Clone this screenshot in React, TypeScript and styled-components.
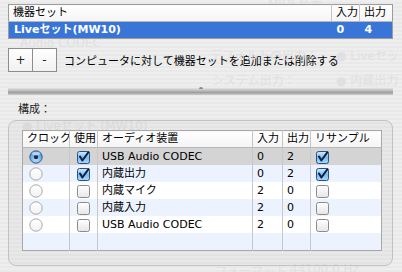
import * as React from "react";
import styled, { createGlobalStyle } from "styled-components";

const GlobalStyle = createGlobalStyle`
  html, body {
    margin: 0;
    padding: 0;
  }
  body {
    width: 402px;
    height: 272px;
    overflow: hidden;
    font-family: "DejaVu Sans", "Noto Sans CJK JP", sans-serif;
    font-size: 11px;
    color: #000;
    background: repeating-linear-gradient(to bottom, #eeeeee 0px, #eeeeee 2px, #e9e9e9 2px, #e9e9e9 4px);
  }
`;

const Window = styled.div`
  position: relative;
  width: 402px;
  height: 272px;
  box-sizing: border-box;
  padding: 4px 9px 0 8px;
  overflow: hidden;
`;

const Ghost = styled.div<{ $x: number; $y: number }>`
  position: absolute;
  left: ${(p) => p.$x}px;
  top: ${(p) => p.$y}px;
  color: #e0e0e0;
  font-size: 12px;
  white-space: nowrap;
  pointer-events: none;
`;

const SetTable = styled.table`
  width: 385px;
  border-collapse: collapse;
  border: 1px solid #9c9c9c;
  background: #fff;
  table-layout: fixed;
  position: relative;
`;

const HeadCell = styled.th<{ $w?: number; $last?: boolean }>`
  box-sizing: border-box;
  width: ${(p) => (p.$w ? `${p.$w}px` : "auto")};
  height: 16px;
  padding: 0 0 0 4px;
  text-align: left;
  font-weight: normal;
  background: linear-gradient(to bottom, #ffffff, #f4f4f4);
  border-bottom: 1px solid #b8b8b8;
  border-right: ${(p) => (p.$last ? "none" : "1px solid #c4c4c4")};
  white-space: nowrap;
  overflow: hidden;
  line-height: 16px;
`;

const SelRow = styled.tr`
  background: #3875d7;
  color: #fff;
  font-weight: bold;
`;

const SelCell = styled.td`
  height: 16px;
  padding: 0 0 0 5px;
  line-height: 16px;
  white-space: nowrap;
`;

const ButtonRow = styled.div`
  display: flex;
  align-items: center;
  margin-top: 9px;
  height: 24px;
`;

const SquareButton = styled.div<{ $first?: boolean }>`
  width: 23px;
  height: 22px;
  display: flex;
  align-items: center;
  justify-content: center;
  border: 1px solid #8c8c8c;
  border-left: ${(p) => (p.$first ? "1px solid #8c8c8c" : "none")};
  background: linear-gradient(to bottom, #ffffff, #f1f1f1);
  font-size: 12px;
  color: #222;
`;

const HelpText = styled.span`
  margin-left: 7px;
  font-size: 11px;
`;

const Splitter = styled.div`
  position: relative;
  margin-top: 15px;
  height: 8px;
  width: 385px;
  background: linear-gradient(to bottom, #f4f4f4 0%, #c8c8c8 35%, #9e9e9e 70%, #cfcfcf 100%);
  border-radius: 1px;
`;

const Dimple = styled.div`
  position: absolute;
  left: 191px;
  top: 0;
  width: 4px;
  height: 2px;
  border-radius: 2px 2px 0 0;
  background: #8a8a8a;
`;

const SectionLabel = styled.div`
  margin: 8px 0 0 10px;
  height: 14px;
  line-height: 14px;
  font-size: 11px;
  color: #222;
`;

const GroupBox = styled.div`
  margin-top: 3px;
  width: 385px;
  height: 146px;
  box-sizing: border-box;
  border: 1px solid #c2c2c2;
  border-radius: 8px;
  background: rgba(0, 0, 0, 0.025);
  padding: 9px 0 0 13px;
  position: relative;
`;

const DeviceTable = styled.table`
  width: 360px;
  border-collapse: collapse;
  table-layout: fixed;
  border: 1px solid #a8a8a8;
  background: #fff;
`;

const DevRow = styled.tr<{ $bg: string }>`
  background: ${(p) => p.$bg};
`;

const DevCell = styled.td<{ $center?: boolean; $pad?: number }>`
  box-sizing: border-box;
  height: 17px;
  padding: 0 0 0 ${(p) => p.$pad ?? (p.$center ? 0 : 4)}px;
  text-align: ${(p) => (p.$center ? "center" : "left")};
  border-right: 1px solid #c8c8c8;
  white-space: nowrap;
  line-height: 17px;
  vertical-align: middle;
  &:last-child {
    border-right: none;
  }
`;

const IconWrap = styled.span<{ $dx?: number }>`
  display: inline-flex;
  vertical-align: middle;
  margin-left: ${(p) => p.$dx ?? 0}px;
`;

const Radio = ({ on }: { on: boolean }) => (
  <IconWrap>
    <svg width="14" height="14" viewBox="0 0 14 14">
      <defs>
        <radialGradient id="rOn" cx="50%" cy="70%" r="60%">
          <stop offset="0%" stopColor="#bfe4ff" />
          <stop offset="100%" stopColor="#4c95dc" />
        </radialGradient>
        <linearGradient id="rOff" x1="0" y1="0" x2="0" y2="1">
          <stop offset="0%" stopColor="#ffffff" />
          <stop offset="100%" stopColor="#f2f2f2" />
        </linearGradient>
      </defs>
      <circle cx="7" cy="7" r="6.2" fill={on ? "url(#rOn)" : "url(#rOff)"} stroke={on ? "#3d5f8f" : "#a8a8a8"} strokeWidth="1" />
      {on && <circle cx="7" cy="7" r="2.2" fill="#1a2a4a" />}
      {on && <ellipse cx="7" cy="3.6" rx="4" ry="1.8" fill="#ffffff" opacity="0.55" />}
    </svg>
  </IconWrap>
);

const Check = ({ on }: { on: boolean }) => (
  <IconWrap>
    <svg width="13" height="13" viewBox="0 0 13 13">
      <defs>
        <linearGradient id="cOn" x1="0" y1="0" x2="0" y2="1">
          <stop offset="0%" stopColor="#d4ecff" />
          <stop offset="50%" stopColor="#78bdf4" />
          <stop offset="100%" stopColor="#a8dafc" />
        </linearGradient>
        <linearGradient id="cOff" x1="0" y1="0" x2="0" y2="1">
          <stop offset="0%" stopColor="#ffffff" />
          <stop offset="100%" stopColor="#e6e6e6" />
        </linearGradient>
      </defs>
      <rect x="0.5" y="0.5" width="12" height="12" rx="2" fill={on ? "url(#cOn)" : "url(#cOff)"} stroke={on ? "#2f4f7f" : "#8a8a8a"} strokeWidth="1" />
      {on && <path d="M3 5.5 L5.4 9.5 L11.5 1.2" fill="none" stroke="#10203c" strokeWidth="2" strokeLinecap="round" strokeLinejoin="round" />}
    </svg>
  </IconWrap>
);

interface Device {
  clock: boolean;
  use: boolean;
  name: string;
  inputs: number;
  outputs: number;
  resample: boolean;
}

const devices: Device[] = [
  { clock: true, use: true, name: "USB Audio CODEC", inputs: 0, outputs: 2, resample: true },
  { clock: false, use: true, name: "内蔵出力", inputs: 0, outputs: 2, resample: true },
  { clock: false, use: false, name: "内蔵マイク", inputs: 2, outputs: 0, resample: false },
  { clock: false, use: false, name: "内蔵入力", inputs: 2, outputs: 0, resample: false },
  { clock: false, use: false, name: "USB Audio CODEC", inputs: 2, outputs: 0, resample: false },
];

const stripe = (i: number) => (i === 0 ? "#d4d4d4" : i % 2 === 1 ? "#edf3fe" : "#ffffff");

const App = () => {
  return (
    <Window>
      <GlobalStyle />
      <Ghost $x={268} $y={-6}>MIDI 装置</Ghost>
      <Ghost $x={20} $y={36}>Audio CODEC</Ghost>
      <Ghost $x={210} $y={46}>デフォルトの出力：</Ghost>
      <Ghost $x={336} $y={46}>● Liveセット</Ghost>
      <Ghost $x={212} $y={71}>システム出力：</Ghost>
      <Ghost $x={336} $y={71}>● 内蔵出力</Ghost>
      <Ghost $x={22} $y={116}>● Liveセット (MW10)</Ghost>
      <Ghost $x={215} $y={262}>フォーマット</Ghost>
      <Ghost $x={290} $y={262}>44100.0 Hz</Ghost>

      <SetTable>
        <thead>
          <tr>
            <HeadCell>機器セット</HeadCell>
            <HeadCell $w={28}>入力</HeadCell>
            <HeadCell $w={33} $last>出力</HeadCell>
          </tr>
        </thead>
        <tbody>
          <SelRow>
            <SelCell>Liveセット(MW10)</SelCell>
            <SelCell>0</SelCell>
            <SelCell>4</SelCell>
          </SelRow>
        </tbody>
      </SetTable>

      <ButtonRow>
        <SquareButton $first>+</SquareButton>
        <SquareButton>-</SquareButton>
        <HelpText>コンピュータに対して機器セットを追加または削除する</HelpText>
      </ButtonRow>

      <Splitter>
        <Dimple />
      </Splitter>

      <SectionLabel>構成：</SectionLabel>

      <GroupBox>
        <DeviceTable>
          <thead>
            <tr>
              <HeadCell $w={47}>クロック</HeadCell>
              <HeadCell $w={28}>使用</HeadCell>
              <HeadCell $w={155}>オーディオ装置</HeadCell>
              <HeadCell $w={30}>入力</HeadCell>
              <HeadCell $w={28}>出力</HeadCell>
              <HeadCell $last>リサンプル</HeadCell>
            </tr>
          </thead>
          <tbody>
            {devices.map((d, i) => (
              <DevRow key={i} $bg={stripe(i)}>
                <DevCell $pad={6}>
                  <Radio on={d.clock} />
                </DevCell>
                <DevCell $center>
                  <Check on={d.use} />
                </DevCell>
                <DevCell>{d.name}</DevCell>
                <DevCell>{d.inputs}</DevCell>
                <DevCell>{d.outputs}</DevCell>
                <DevCell>
                  <IconWrap $dx={1}>
                    <Check on={d.resample} />
                  </IconWrap>
                </DevCell>
              </DevRow>
            ))}
            <DevRow $bg="#edf3fe">
              <DevCell />
              <DevCell />
              <DevCell />
              <DevCell />
              <DevCell />
              <DevCell />
            </DevRow>
          </tbody>
        </DeviceTable>
      </GroupBox>
    </Window>
  );
};

export default App;
